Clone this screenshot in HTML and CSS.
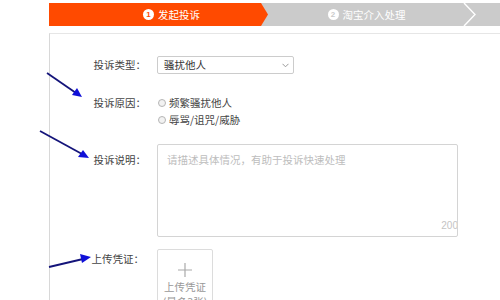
FILE: index.html
```html
<!DOCTYPE html>
<html lang="zh">
<head>
<meta charset="utf-8">
<link rel="stylesheet" href="styles.css">
</head>
<body>
<div class="steps">
  <div class="step step-active"><span class="num">1</span>发起投诉</div>
  <div class="step step-next"><span class="num">2</span>淘宝介入处理</div>
  <svg class="chev" width="14" height="23" viewBox="0 0 14 23"><polyline points="1,0 12,11.5 1,23" fill="none" stroke="#fff" stroke-width="1.4"/></svg>
  <div class="step step-rest"></div>
</div>
<div class="panel">
  <div class="row row-type">
    <div class="label">投诉类型：</div>
    <div class="select"><span>骚扰他人</span><svg width="7" height="5" viewBox="0 0 7 5"><polyline points="0.5,0.8 3.5,3.8 6.5,0.8" fill="none" stroke="#999" stroke-width="1"/></svg></div>
  </div>
  <div class="row row-reason">
    <div class="label">投诉原因：</div>
    <div class="options">
      <div class="opt"><span class="radio"></span>频繁骚扰他人</div>
      <div class="opt"><span class="radio"></span>辱骂/诅咒/威胁</div>
    </div>
  </div>
  <div class="row row-desc">
    <div class="label">投诉说明：</div>
    <div class="textarea"><span class="ph">请描述具体情况，有助于投诉快速处理</span><span class="count">200</span></div>
  </div>
  <div class="row row-upload">
    <div class="label">上传凭证：</div>
    <div class="upload">
      <svg width="14" height="14" viewBox="0 0 14 14"><path d="M7 0V14M0 7H14" stroke="#aaa" stroke-width="1.2"/></svg>
      <div class="up-text">上传凭证<br>(最多3张)</div>
    </div>
  </div>
</div>
<svg class="arrows" width="500" height="300" viewBox="0 0 500 300">
  <line x1="47" y1="73" x2="76" y2="93" stroke="#14147a" stroke-width="1.8"/>
  <polygon points="82,97 72,95 77,88" fill="#1010d8"/>
  <line x1="40" y1="131" x2="82" y2="154" stroke="#14147a" stroke-width="1.8"/>
  <polygon points="89,158 78,157 83,150" fill="#1010d8"/>
  <line x1="49" y1="267" x2="83" y2="259" stroke="#14147a" stroke-width="1.8"/>
  <polygon points="91,257 82,263 80,254" fill="#1010d8"/>
</svg>
</body>
</html>
```
FILE: styles.css
```css
* { box-sizing: border-box; }
html, body { margin: 0; padding: 0; }
body {
  width: 500px;
  height: 300px;
  overflow: hidden;
  background: #fff;
  font-family: "Noto Sans CJK SC", "Noto Sans", sans-serif;
  font-size: 10.5px;
  color: #444;
  position: relative;
}
.steps {
  display: flex;
  margin: 3px 0 0 49px;
  height: 23px;
  background: #cbcbcb;
}
.step {
  display: flex;
  align-items: center;
  justify-content: center;
  color: #fff;
  font-size: 10.5px;
  line-height: 23px;
}
.step-active {
  width: 219px;
  padding-left: 26px;
  background: #ff4a00;
  clip-path: polygon(0 0, 212px 0, 219px 50%, 212px 100%, 0 100%);
}
.step-next {
  width: 195px;
  padding-left: 2px;
}
.chev { flex: none; display: block; }
.step-rest { flex: 1; }
.num {
  display: inline-flex;
  align-items: center;
  justify-content: center;
  width: 11px;
  height: 11px;
  border-radius: 50%;
  background: #fff;
  font-family: "Liberation Sans", sans-serif;
  font-weight: bold;
  font-size: 8px;
  line-height: 11px;
  margin-right: 4px;
}
.step-active .num { color: #ff4a00; }
.step-next .num { color: #cbcbcb; }
.panel {
  margin: 7px 0 0 49px;
  height: 300px;
  border-top: 1px solid #e6e6e6;
  border-left: 1px solid #d8d8d8;
}
.row { display: flex; align-items: flex-start; }
.label {
  width: 107px;
  flex: none;
  text-align: right;
  padding-right: 11px;
  line-height: 17px;
  color: #444;
}
.row-type { margin-top: 22px; }
.row-type .label { line-height: 18px; }
.select {
  width: 137px;
  height: 18px;
  border: 1px solid #ccc;
  border-radius: 2px;
  display: flex;
  align-items: center;
  justify-content: space-between;
  padding: 0 4px 0 6px;
  line-height: 16px;
  color: #333;
}
.row-reason { margin-top: 20px; }
.opt {
  display: flex;
  align-items: center;
  height: 17px;
  line-height: 17px;
}
.radio {
  width: 8px;
  height: 8px;
  border-radius: 50%;
  border: 1px solid #b5b5b5;
  background: #f2f2f2;
  margin: 0 3px 0 1px;
}
.row-desc { margin-top: 16px; }
.row-desc .label { padding-top: 7px; }
.textarea {
  width: 301px;
  height: 93px;
  border: 1px solid #d4d4d4;
  border-radius: 2px;
  padding: 6px 9px;
  display: flex;
  flex-direction: column;
  justify-content: space-between;
  line-height: 17px;
  overflow: hidden;
}
.ph { color: #bdbdbd; }
.count {
  align-self: flex-end;
  color: #c4c4c4;
  font-family: "Liberation Sans", sans-serif;
  font-size: 10px;
  line-height: 12px;
  margin-right: -10px;
  margin-bottom: -2px;
}
.row-upload { margin-top: 12px; }
.row-upload .label { padding-top: 1px; padding-right: 13px; }
.upload {
  width: 56px;
  height: 70px;
  border: 1px solid #dcdcdc;
  border-radius: 2px;
  display: flex;
  flex-direction: column;
  align-items: center;
  padding-top: 13px;
}
.up-text {
  margin-top: 2px;
  text-align: center;
  color: #999;
  line-height: 15px;
}
.arrows {
  position: absolute;
  left: 0;
  top: 0;
  pointer-events: none;
}
```
